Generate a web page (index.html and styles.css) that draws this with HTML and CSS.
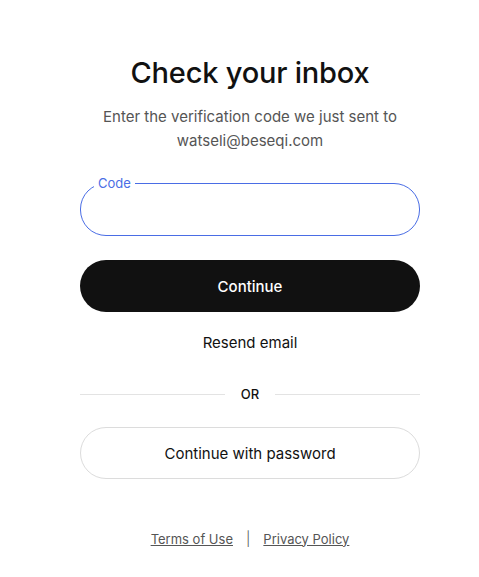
FILE: index.html
```html
<!DOCTYPE html>
<html lang="en">
<head>
    <meta charset="UTF-8">
    <meta name="viewport" content="width=device-width, initial-scale=1.0">
    <title>Check your inbox</title>
    <link rel="stylesheet" href="styles.css">
</head>
<body>
    <main class="page">
        <section class="card">
            <h1 class="title">Check your inbox</h1>
            <p class="subtitle">Enter the verification code we just sent to watseli@beseqi.com</p>

            <form class="form">
                <fieldset class="field">
                    <legend class="field-label">Code</legend>
                    <input class="field-input" type="text" name="code" autocomplete="one-time-code">
                </fieldset>
                <button type="submit" class="btn btn-primary">Continue</button>
            </form>

            <button class="btn-link">Resend email</button>

            <div class="divider">
                <span class="divider-line"></span>
                <span class="divider-text">OR</span>
                <span class="divider-line"></span>
            </div>

            <button class="btn btn-outline">Continue with password</button>
        </section>

        <footer class="footer">
            <a href="#">Terms of Use</a>
            <span class="sep">|</span>
            <a href="#">Privacy Policy</a>
        </footer>
    </main>
</body>
</html>
```

FILE: styles.css
```css
* {
    margin: 0;
    padding: 0;
    box-sizing: border-box;
    font-family: Inter, "Noto Sans", Arial, sans-serif;
}

body {
    background: #fff;
    color: #111;
    padding-left: 21px;
}

.page {
    width: 340px;
    margin: 0 auto;
    padding-top: 53px;
    display: flex;
    flex-direction: column;
    align-items: center;
}

.card {
    width: 100%;
    display: flex;
    flex-direction: column;
    align-items: center;
}

.title {
    font-size: 29px;
    font-weight: 500;
    letter-spacing: -0.2px;
    line-height: 40px;
    color: #111;
}

.subtitle {
    margin-top: 12px;
    width: 310px;
    text-align: center;
    font-size: 15px;
    line-height: 24px;
    color: #555;
}

.form {
    width: 100%;
    margin-top: 29px;
    display: flex;
    flex-direction: column;
    gap: 24px;
}

.field {
    height: 60px;
    border: 1px solid #4a6de5;
    border-radius: 26px;
    padding: 0 13px;
    margin-top: -6px;
}

.field-label {
    font-size: 13px;
    color: #4a6de5;
    padding: 0 4px;
    line-height: 14px;
}

.field-input {
    width: 100%;
    height: 38px;
    border: none;
    outline: none;
    font-size: 16px;
    background: transparent;
}

.btn {
    width: 100%;
    height: 52px;
    border-radius: 26px;
    font-size: 15px;
    font-weight: 500;
    cursor: pointer;
}

.btn-primary {
    background: #111;
    color: #fff;
    border: none;
}

.btn-outline {
    background: #fff;
    color: #111;
    border: 1px solid #dcdcdc;
    font-weight: 400;
}

.btn-link {
    margin-top: 20px;
    background: none;
    border: none;
    font-size: 15px;
    color: #111;
    line-height: 22px;
    cursor: pointer;
}

.divider {
    width: 100%;
    margin: 32px 0 25px;
    display: flex;
    align-items: center;
    gap: 16px;
}

.divider-line {
    flex: 1;
    height: 1px;
    background: #e3e3e3;
}

.divider-text {
    font-size: 13px;
    font-weight: 500;
    color: #111;
}

.footer {
    margin-top: 51px;
    display: flex;
    align-items: center;
    gap: 13px;
    font-size: 13px;
    color: #555;
}

.footer a {
    color: #555;
}

.sep {
    color: #555;
    font-size: 14px;
    font-weight: 300;
}
```
